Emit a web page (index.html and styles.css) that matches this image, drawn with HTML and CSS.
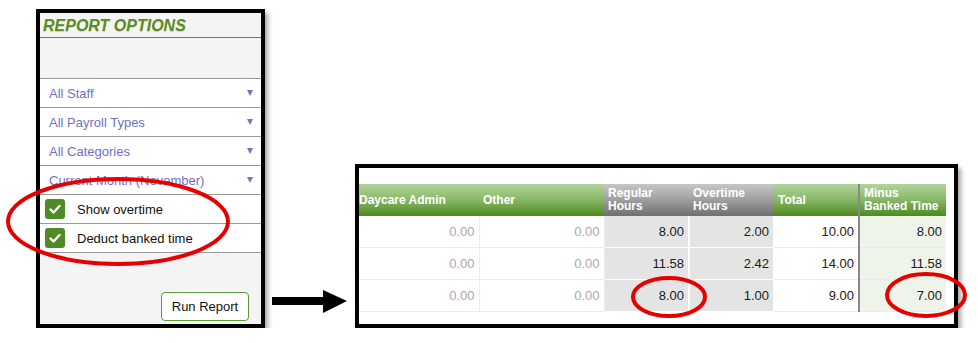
FILE: index.html
```html
<!DOCTYPE html>
<html lang="en">
<head>
    <meta charset="UTF-8">
    <title>Report Options - Overtime</title>
    <link rel="stylesheet" href="styles.css">
</head>
<body>
    <div class="page">
        <div class="options">
            <div class="options-title">REPORT OPTIONS</div>
            <div class="options-spacer"></div>
            <ul class="option-list">
                <li class="select-row"><span>All Staff</span><span class="caret"></span></li>
                <li class="select-row"><span>All Payroll Types</span><span class="caret"></span></li>
                <li class="select-row"><span>All Categories</span><span class="caret"></span></li>
                <li class="select-row"><span>Current Month (November)</span><span class="caret"></span></li>
                <li class="check-row">
                    <span class="check"><svg width="20" height="20" viewBox="0 0 20 20"><polyline points="5.5,10.5 8.5,13.5 14.5,7" fill="none" stroke="#fff" stroke-width="2.4" stroke-linecap="round" stroke-linejoin="round"/></svg></span>
                    Show overtime
                </li>
                <li class="check-row">
                    <span class="check"><svg width="20" height="20" viewBox="0 0 20 20"><polyline points="5.5,10.5 8.5,13.5 14.5,7" fill="none" stroke="#fff" stroke-width="2.4" stroke-linecap="round" stroke-linejoin="round"/></svg></span>
                    Deduct banked time
                </li>
            </ul>
            <div class="options-foot">
                <button class="run-btn">Run Report</button>
            </div>
        </div>

        <div class="results">
            <table class="hours">
                <colgroup>
                    <col class="w-wide"><col class="w-other"><col class="w-num"><col class="w-num"><col class="w-num"><col class="w-minus"><col>
                </colgroup>
                <thead>
                    <tr>
                        <th class="green first">Daycare Admin</th>
                        <th class="green">Other</th>
                        <th class="grey">Regular<br>Hours</th>
                        <th class="grey">Overtime<br>Hours</th>
                        <th class="green">Total</th>
                        <th class="green minus">Minus<br>Banked Time</th>
                        <th class="blank"></th>
                    </tr>
                </thead>
                <tbody>
                    <tr>
                        <td class="muted">0.00</td><td class="muted">0.00</td>
                        <td class="shade">8.00</td><td class="shade">2.00</td>
                        <td>10.00</td><td class="minus">8.00</td><td class="blank"></td>
                    </tr>
                    <tr>
                        <td class="muted">0.00</td><td class="muted">0.00</td>
                        <td class="shade">11.58</td><td class="shade">2.42</td>
                        <td>14.00</td><td class="minus">11.58</td><td class="blank"></td>
                    </tr>
                    <tr>
                        <td class="muted">0.00</td><td class="muted">0.00</td>
                        <td class="shade">8.00</td><td class="shade">1.00</td>
                        <td>9.00</td><td class="minus">7.00</td><td class="blank"></td>
                    </tr>
                </tbody>
            </table>
        </div>
    </div>

    <!-- annotation marks drawn over the screenshot -->
    <svg class="marks" width="978" height="343" viewBox="0 0 978 343">
        <ellipse cx="118" cy="221.5" rx="110" ry="42.5" fill="none" stroke="#e80000" stroke-width="4"/>
        <ellipse cx="669" cy="297" rx="36" ry="19" fill="none" stroke="#e80000" stroke-width="4"/>
        <ellipse cx="926" cy="295" rx="39" ry="21" fill="none" stroke="#e80000" stroke-width="4"/>
        <rect x="272" y="297" width="52" height="8" fill="#000"/>
        <polygon points="323,290 347,301 323,313" fill="#000"/>
    </svg>
</body>
</html>
```

FILE: styles.css
```css
body {
    margin: 0;
    background: #fff;
    font-family: "Liberation Sans", Arial, sans-serif;
}

.page {
    display: flex;
    align-items: flex-start;
    padding: 9px 0 0 36px;
}

/* left options panel */
.options {
    box-sizing: border-box;
    width: 229px;
    height: 319px;
    border: 4px solid #000;
    background: #f4f4f4;
    box-shadow: 3px 4px 5px rgba(0, 0, 0, 0.35);
}

.options-title {
    height: 20px;
    line-height: 20px;
    padding: 3px 0 1px 3px;
    border-bottom: 1px solid #5b8f24;
    font-size: 16px;
    font-weight: bold;
    font-style: italic;
    color: #5a8d1f;
    text-shadow: 0 1px 0 rgba(140, 110, 20, 0.25);
}

.options-spacer {
    height: 40px;
}

.option-list {
    list-style: none;
    margin: 0;
    padding: 0;
    border-bottom: 1px solid #9a9a9a;
}

.option-list li {
    height: 28px;
    border-top: 1px solid #9a9a9a;
    background: #fff;
    display: flex;
    align-items: center;
    font-size: 13px;
}

.select-row {
    justify-content: space-between;
    padding: 0 8px 0 9px;
    color: #7070c6;
}

.caret {
    width: 0;
    height: 0;
    border-left: 3px solid transparent;
    border-right: 3px solid transparent;
    border-top: 6px solid #7474c2;
}

.check-row {
    padding-left: 5px;
    gap: 12px;
    color: #111;
}

.check {
    width: 20px;
    height: 20px;
    border-radius: 3px;
    background: #4f8b25;
    display: flex;
}

.options-foot {
    display: flex;
    justify-content: flex-end;
    padding: 39px 12px 0 0;
}

.run-btn {
    width: 88px;
    height: 29px;
    background: #fff;
    border: 1px solid #5d9a3a;
    border-radius: 4px;
    font-family: inherit;
    font-size: 13px;
    color: #111;
    padding: 0;
}

/* right results table */
.results {
    box-sizing: border-box;
    width: 603px;
    height: 164px;
    margin: 155px 0 0 90px;
    padding-top: 16px;
    border: 4px solid #000;
    background: #fff;
    box-shadow: 3px 4px 5px rgba(0, 0, 0, 0.35);
}

.hours {
    width: 595px;
    table-layout: fixed;
    border-collapse: collapse;
    font-size: 12px;
}

.w-wide { width: 120px; }
.w-other { width: 125px; }
.w-num { width: 85px; }
.w-minus { width: 87px; }

.hours th {
    height: 32px;
    padding: 0 4px;
    text-align: left;
    line-height: 13px;
    font-weight: bold;
    color: #fff;
}

.hours th.first {
    padding-left: 0;
}

.hours th.green {
    background: linear-gradient(#b1d49b, #8cbb6c 45%, #4c8a1f);
}

.hours th.grey {
    background: linear-gradient(#c6c6c6, #a3a3a3 45%, #6f6f6f);
}

.hours th.blank,
.hours td.blank {
    background: #fff;
    border: none;
}

.hours td {
    height: 31px;
    padding: 0 4px;
    text-align: right;
    font-size: 13px;
    color: #1a1a1a;
    border-bottom: 1px solid #ececec;
}

.hours td.muted {
    color: #a9a9a9;
    border-right: 1px solid #ececec;
}

.hours td.shade {
    background: #e4e4e4;
    border-right: 2px solid #fff;
    border-bottom: 1px solid #fff;
}

.hours .minus {
    border-left: 2px solid #8a8a8a;
}

.hours td.minus {
    background: #eef4e8;
}

.marks {
    position: absolute;
    left: 0;
    top: 0;
    pointer-events: none;
}
```
